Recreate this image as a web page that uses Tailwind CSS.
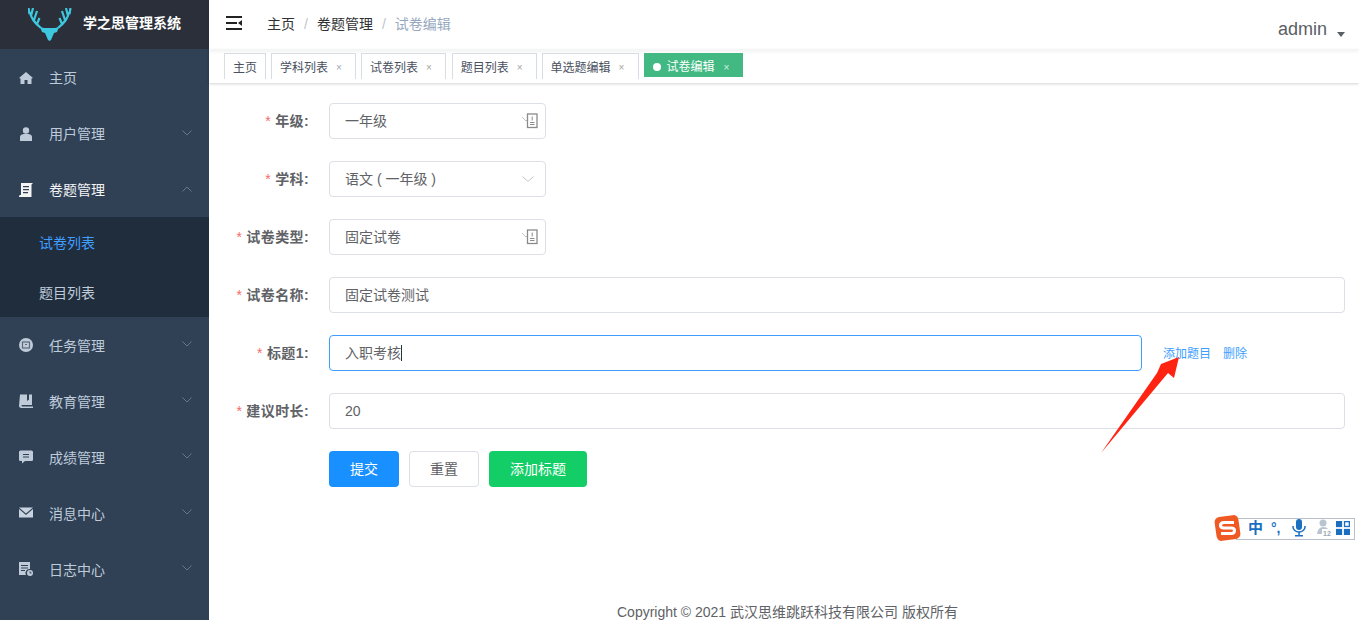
<!DOCTYPE html>
<html lang="zh">
<head>
<meta charset="utf-8">
<script src="https://cdn.jsdelivr.net/npm/@tailwindcss/browser@4"></script>
</head>
<body class="font-['Liberation_Sans','Noto_Sans_CJK_SC',sans-serif] bg-white">
<div class="relative flex h-[620px] w-[1359px] overflow-hidden">
  <!-- sidebar -->
  <aside class="w-[209px] shrink-0 bg-[#304156] text-[14px] text-[#bfcbd9]">
    <div class="flex h-[49px] items-center bg-[#2b2f3a]">
      <svg class="ml-[28px] h-[33px] w-[44px]" viewBox="0 0 44 33"><g fill="none" stroke="#3ec8df" stroke-width="2.200"><path d="M2 4 Q3 12 13 20 M1.500 6 L0.500 0 M3 8 L5 0 M6 12 L9 3 M9 16 L11.500 10"/><path d="M41 4 Q40 12 30 20 M41.500 6 L42.500 0 M40 8 L38 0 M37 12 L34 3 M34 16 L31.500 10"/></g><path d="M12 19 L16 20 L27 20 L31 19 L29 24 L26 25 L23 32 L21.500 33 L20 32 L17 25 L14 24 Z" fill="#3ec8df"/></svg>
      <span class="ml-[11px] mb-[2px] text-[14px] font-bold text-white">学之思管理系统</span>
    </div>
    <nav>
      <a class="flex h-[57px] items-center pl-[19px]">
        <svg class="h-[14px] w-[14px]" viewBox="0 0 14 14" fill="#bfcbd9"><path d="M7 1 L14 7 L12.500 7.500 L12.500 13 L8.500 13 L8.500 9 L5.500 9 L5.500 13 L1.500 13 L1.500 7.500 L0 7 Z"/></svg>
        <span class="ml-[16px] mt-[2px]">主页</span>
      </a>
      <a class="flex h-[56px] items-center pl-[19px]">
        <svg class="h-[14px] w-[14px]" viewBox="0 0 14 14" fill="#bfcbd9"><circle cx="7" cy="3.500" r="3.200"/><path d="M1 14 L1 10 Q1 7.500 4.500 7 L9.500 7 Q13 7.500 13 10 L13 14 Z"/></svg>
        <span class="ml-[16px] mt-[1px]">用户管理</span>
        <svg class="ml-auto mb-[2px] mr-[17px] h-[6px] w-[10px]" viewBox="0 0 10 6" fill="none" stroke="#6b7683"><path d="M0.500 0.500 L5 5 L9.500 0.500"/></svg>
      </a>
      <a class="flex h-[55px] items-center pl-[19px] text-[#f4f4f5]">
        <svg class="h-[14px] w-[14px]" viewBox="0 0 14 14" fill="#f4f4f5"><path d="M2 0 L14 0 L12.500 1.500 L12.500 14 L0 14 L0.500 12 L2 12 Z M4 3 V4.200 H10 V3 Z M4 6 V7.200 H10 V6 Z M4 9 V10.200 H9 V9 Z" fill-rule="evenodd"/></svg>
        <span class="ml-[16px] mt-[2px]">卷题管理</span>
        <svg class="ml-auto mb-[2px] mr-[17px] h-[6px] w-[10px]" viewBox="0 0 10 6" fill="none" stroke="#6b7683"><path d="M0.500 5.500 L5 1 L9.500 5.500"/></svg>
      </a>
      <div class="bg-[#1f2d3d]">
        <a class="flex h-[50px] items-center pl-[39px] pt-[2px] text-[#409eff]">试卷列表</a>
        <a class="flex h-[50px] items-center pl-[39px] pt-[2px]">题目列表</a>
      </div>
      <a class="flex h-[56px] items-center pl-[19px]">
        <svg class="h-[14px] w-[14px]" viewBox="0 0 14 14"><circle cx="7" cy="7" r="7" fill="#bfcbd9"/><rect x="3.500" y="4" width="7" height="6" fill="none" stroke="#5c6a7c" stroke-width="1.200"/><path d="M6 6.500 H8" stroke="#5c6a7c"/></svg>
        <span class="ml-[16px] mt-[2px]">任务管理</span>
        <svg class="ml-auto mb-[2px] mr-[17px] h-[6px] w-[10px]" viewBox="0 0 10 6" fill="none" stroke="#6b7683"><path d="M0.500 0.500 L5 5 L9.500 0.500"/></svg>
      </a>
      <a class="flex h-[56px] items-center pl-[19px]">
        <svg class="h-[14px] w-[14px]" viewBox="0 0 14 14" fill="#bfcbd9"><path d="M1 0.500 L8 0.500 L8 7 L10 5.500 L10 0.500 L13 0.500 L13 11 L3 11 Q1.800 11.500 3 12.500 L14 12.500 L14 14 L2 14 Q0 13.500 0 12 Z"/></svg>
        <span class="ml-[16px] mt-[2px]">教育管理</span>
        <svg class="ml-auto mb-[2px] mr-[17px] h-[6px] w-[10px]" viewBox="0 0 10 6" fill="none" stroke="#6b7683"><path d="M0.500 0.500 L5 5 L9.500 0.500"/></svg>
      </a>
      <a class="flex h-[56px] items-center pl-[19px]">
        <svg class="h-[14px] w-[14px]" viewBox="0 0 14 14" fill="#bfcbd9"><path d="M1.500 0.500 H12.500 Q14 0.500 14 2 V10 Q14 11 12.500 11 H6 L3 13.500 L3 11 H1.500 Q0 11 0 10 V2 Q0 0.500 1.500 0.500 Z M4 4 V5 H10 V4 Z M4 6.500 V7.500 H10 V6.500 Z" fill-rule="evenodd"/></svg>
        <span class="ml-[16px] mt-[2px]">成绩管理</span>
        <svg class="ml-auto mb-[2px] mr-[17px] h-[6px] w-[10px]" viewBox="0 0 10 6" fill="none" stroke="#6b7683"><path d="M0.500 0.500 L5 5 L9.500 0.500"/></svg>
      </a>
      <a class="flex h-[56px] items-center pl-[19px]">
        <svg class="h-[14px] w-[14px]" viewBox="0 0 14 14" fill="#c9d3df"><path d="M0 1.500 L7 7.500 L14 1.500 Z M0 3 V11.500 H14 V3 L7 9 Z"/></svg>
        <span class="ml-[16px] mt-[2px]">消息中心</span>
        <svg class="ml-auto mb-[2px] mr-[17px] h-[6px] w-[10px]" viewBox="0 0 10 6" fill="none" stroke="#6b7683"><path d="M0.500 0.500 L5 5 L9.500 0.500"/></svg>
      </a>
      <a class="flex h-[56px] items-center pl-[19px]">
        <svg class="h-[14px] w-[14px]" viewBox="0 0 14 14" fill="#bfcbd9"><path d="M0 0 H11 V7 A4 4 0 0 0 7 13 H0 Z M2 3 V4 H9 V3 Z M2 5.500 V6.500 H9 V5.500 Z M2 8 V9 H6 V8 Z" fill-rule="evenodd"/><circle cx="11" cy="11" r="3"/><path d="M11 9.500 V11 H12.500" stroke="#304156" fill="none"/></svg>
        <span class="ml-[16px] mt-[2px]">日志中心</span>
        <svg class="ml-auto mb-[2px] mr-[17px] h-[6px] w-[10px]" viewBox="0 0 10 6" fill="none" stroke="#6b7683"><path d="M0.500 0.500 L5 5 L9.500 0.500"/></svg>
      </a>
    </nav>
  </aside>

  <!-- main -->
  <div class="flex min-w-0 flex-1 flex-col">
    <header class="flex h-[50px] items-center shadow-[0_1px_4px_rgba(0,21,41,0.08)]">
      <svg class="mb-[4px] ml-[17px] h-[14px] w-[16px]" viewBox="0 0 16 14" fill="#222"><rect x="0" y="0" width="16" height="2"/><rect x="0" y="6" width="11" height="2"/><rect x="0" y="12" width="16" height="2"/><path d="M16 4 V10 L12 7 Z"/></svg>
      <div class="mb-[2px] ml-[25px] flex items-center text-[14px] leading-none text-[#303133]">
        <span>主页</span>
        <span class="mx-[9px] text-[#c0c4cc]">/</span>
        <span>卷题管理</span>
        <span class="mx-[9px] text-[#c0c4cc]">/</span>
        <span class="text-[#97a8be]">试卷编辑</span>
      </div>
      <div class="ml-auto mr-[14px] mt-[8px] flex items-center text-[18px] text-[#5a5e66]">
        <span>admin</span>
        <span class="ml-[10px] mt-[10px] h-0 w-0 border-x-[4px] border-t-[5px] border-x-transparent border-t-[#5a5e66]"></span>
      </div>
    </header>
    <div class="flex h-[33px] items-start gap-[5px] pl-[15px] pt-[3px] text-[12px] text-[#495060] shadow-[0_1px_3px_0_rgba(0,0,0,0.16),0_0_3px_0_rgba(0,0,0,0.04)]">
      <span class="flex h-[26px] items-center border border-b-0 border-[#d8dce5] px-[8px] pt-[2px]">主页</span>
      <span class="flex h-[26px] items-center border border-b-0 border-[#d8dce5] pl-[8px] pr-[13px] pt-[2px]">学科列表<span class="ml-[8px] text-[10px] text-[#a0a6b2]">×</span></span>
      <span class="flex h-[26px] items-center border border-b-0 border-[#d8dce5] pl-[8px] pr-[13px] pt-[2px]">试卷列表<span class="ml-[8px] text-[10px] text-[#a8a49e]">×</span></span>
      <span class="ml-[1px] flex h-[26px] items-center border border-b-0 border-[#d8dce5] pl-[8px] pr-[13px] pt-[2px]">题目列表<span class="ml-[8px] text-[10px] text-[#a8a49e]">×</span></span>
      <span class="flex h-[26px] items-center border border-b-0 border-[#d8dce5] pl-[8px] pr-[14px] pt-[2px]">单选题编辑<span class="ml-[8px] text-[10px] text-[#a8a49e]">×</span></span>
      <span class="flex h-[24px] items-center bg-[#42b983] pl-[9px] pr-[14px] pt-[4px] text-white"><span class="mr-[5px] h-[8px] w-[8px] rounded-full bg-white"></span>试卷编辑<span class="ml-[9px] text-[10px] text-[#d5f0e2]">×</span></span>
    </div>

    <form class="flex flex-col gap-[22px] pl-[20px] pr-[14px] pt-[20px] text-[14px] text-[#606266]">
      <div class="flex h-[36px] items-center">
        <label class="w-[100px] pr-[20px] text-right font-bold tracking-[0.4px]"><span class="mr-[4px] font-normal text-[#f56c6c]">*</span>年级:</label>
        <div class="flex h-[36px] w-[217px] items-center rounded-[4px] border border-[#dcdfe6] pl-[15px] pr-[7px]">一年级
          <svg class="ml-auto h-[16px] w-[16px]" viewBox="0 0 16 16" fill="none"><path d="M0 4 L4 8 L5 7" stroke="#c0c4cc"/><rect x="5.500" y="1" width="9.500" height="13.500" stroke="#8a8a8a" stroke-width="1.300"/><path d="M10.200 3.500 V7.500 M8 9.500 H12.500 M8 11.500 H12.500" stroke="#8a8a8a"/></svg>
        </div>
      </div>
      <div class="flex h-[36px] items-center">
        <label class="w-[100px] pr-[20px] text-right font-bold tracking-[0.4px]"><span class="mr-[4px] font-normal text-[#f56c6c]">*</span>学科:</label>
        <div class="flex h-[36px] w-[217px] items-center rounded-[4px] border border-[#dcdfe6] pl-[15px] pr-[11px]">语文 ( 一年级 )
          <svg class="ml-auto h-[6px] w-[12px]" viewBox="0 0 12 6" fill="none" stroke="#c0c4cc"><path d="M0.500 0.500 L6 5.500 L11.500 0.500"/></svg>
        </div>
      </div>
      <div class="flex h-[36px] items-center">
        <label class="w-[100px] pr-[20px] text-right font-bold tracking-[0.4px]"><span class="mr-[4px] font-normal text-[#f56c6c]">*</span>试卷类型:</label>
        <div class="flex h-[36px] w-[217px] items-center rounded-[4px] border border-[#dcdfe6] pl-[15px] pr-[7px]">固定试卷
          <svg class="ml-auto h-[16px] w-[16px]" viewBox="0 0 16 16" fill="none"><path d="M0 4 L4 8 L5 7" stroke="#c0c4cc"/><rect x="5.500" y="1" width="9.500" height="13.500" stroke="#8a8a8a" stroke-width="1.300"/><path d="M10.200 3.500 V7.500 M8 9.500 H12.500 M8 11.500 H12.500" stroke="#8a8a8a"/></svg>
        </div>
      </div>
      <div class="flex h-[36px] items-center">
        <label class="w-[100px] pr-[20px] text-right font-bold tracking-[0.4px]"><span class="mr-[4px] font-normal text-[#f56c6c]">*</span>试卷名称:</label>
        <div class="flex h-[36px] flex-1 items-center rounded-[4px] border border-[#dcdfe6] pl-[15px]">固定试卷测试</div>
      </div>
      <div class="flex h-[36px] items-center">
        <label class="w-[100px] pr-[20px] text-right font-bold tracking-[0.4px]"><span class="mr-[4px] font-normal text-[#f56c6c]">*</span>标题1:</label>
        <div class="flex h-[36px] w-[813px] items-center rounded-[4px] border border-[#409eff] pl-[15px]">入职考核<span class="h-[16px] w-px bg-[#303133]"></span></div>
        <span class="ml-[21px] mt-[2px] text-[12px] text-[#409eff]">添加题目</span>
        <span class="ml-[12px] mt-[2px] text-[12px] text-[#409eff]">删除</span>
      </div>
      <div class="flex h-[36px] items-center">
        <label class="w-[100px] pr-[20px] text-right font-bold tracking-[0.4px]"><span class="mr-[4px] font-normal text-[#f56c6c]">*</span>建议时长:</label>
        <div class="flex h-[36px] flex-1 items-center rounded-[4px] border border-[#dcdfe6] pl-[15px]">20</div>
      </div>
      <div class="flex h-[36px] items-center pl-[100px]">
        <span class="flex h-[36px] w-[70px] items-center justify-center rounded-[4px] bg-[#1890ff] text-white">提交</span>
        <span class="ml-[10px] flex h-[36px] w-[70px] items-center justify-center rounded-[4px] border border-[#dcdfe6]">重置</span>
        <span class="ml-[10px] flex h-[36px] w-[98px] items-center justify-center rounded-[4px] bg-[#13ce66] text-white">添加标题</span>
      </div>
    </form>

    <footer class="absolute left-[617px] top-[604px] text-[14px] leading-[16px] text-[#606266]">Copyright © 2021 武汉思维跳跃科技有限公司 版权所有</footer>
  </div>

  <!-- annotation arrow -->
  <svg class="absolute left-[1095px] top-[355px]" width="90" height="102" viewBox="0 0 90 102"><path d="M6 98 L62 18 L66 9 L84 2 L79 23 L73 18 Z" fill="#ff2412"/></svg>

  <!-- IME bar -->
  <div class="absolute left-[1214px] top-[513px] flex h-[30px] w-[141px] items-center">
    <div class="absolute left-[22px] top-[5px] h-[22px] w-[119px] border border-[#b9c0cc] bg-white"></div>
    <svg class="absolute left-0 top-0 h-[30px] w-[27px]" viewBox="0 0 27 30"><rect x="1.500" y="3" width="24" height="24" rx="5" fill="#ef5a24" transform="rotate(-8 13.500 15)"/><path d="M20 9.500 H10 Q6.500 9.500 6.500 12.500 Q6.500 15 10 15 H17 Q20.500 15 20.500 17.500 Q20.500 20.500 17 20.500 H7" fill="none" stroke="#fff" stroke-width="3"/></svg>
    <span class="absolute left-[34px] top-[5px] text-[15px] font-bold leading-[20px] text-[#1a6fc0]">中</span>
    <span class="absolute left-[57px] top-[5px] text-[14px] font-bold leading-[20px] text-[#1a6fc0]">°,</span>
    <svg class="absolute left-[78px] top-[6px] h-[18px] w-[14px]" viewBox="0 0 14 18" fill="#1a6fc0"><rect x="4" y="0" width="6" height="11" rx="3"/><path d="M1 7 V8 A6 5 0 0 0 13 8 V7" fill="none" stroke="#1a6fc0" stroke-width="1.500"/><rect x="6.300" y="13" width="1.500" height="3"/><rect x="3" y="16" width="8" height="1.500"/></svg>
    <svg class="absolute left-[102px] top-[6px] h-[18px] w-[16px]" viewBox="0 0 16 18" fill="#b8c4d0"><circle cx="7" cy="4" r="3.500"/><path d="M1 15 Q2 8 7 8 Q11 8 12 10 V15 Z"/><rect x="6" y="10" width="10" height="7" fill="#fff"/><text x="7" y="16.500" font-size="7" font-weight="700" fill="#9aa6b2">12</text></svg>
    <svg class="absolute left-[122px] top-[8px] h-[14px] w-[14px]" viewBox="0 0 16 16" fill="#1a6fc0"><rect x="0" y="0" width="7" height="7"/><rect x="9.750" y="0.750" width="5.500" height="5.500" fill="none" stroke="#1a6fc0" stroke-width="1.500"/><rect x="0" y="9" width="7" height="7"/><rect x="9" y="9" width="7" height="7"/></svg>
  </div>
</div>
</body>
</html>
